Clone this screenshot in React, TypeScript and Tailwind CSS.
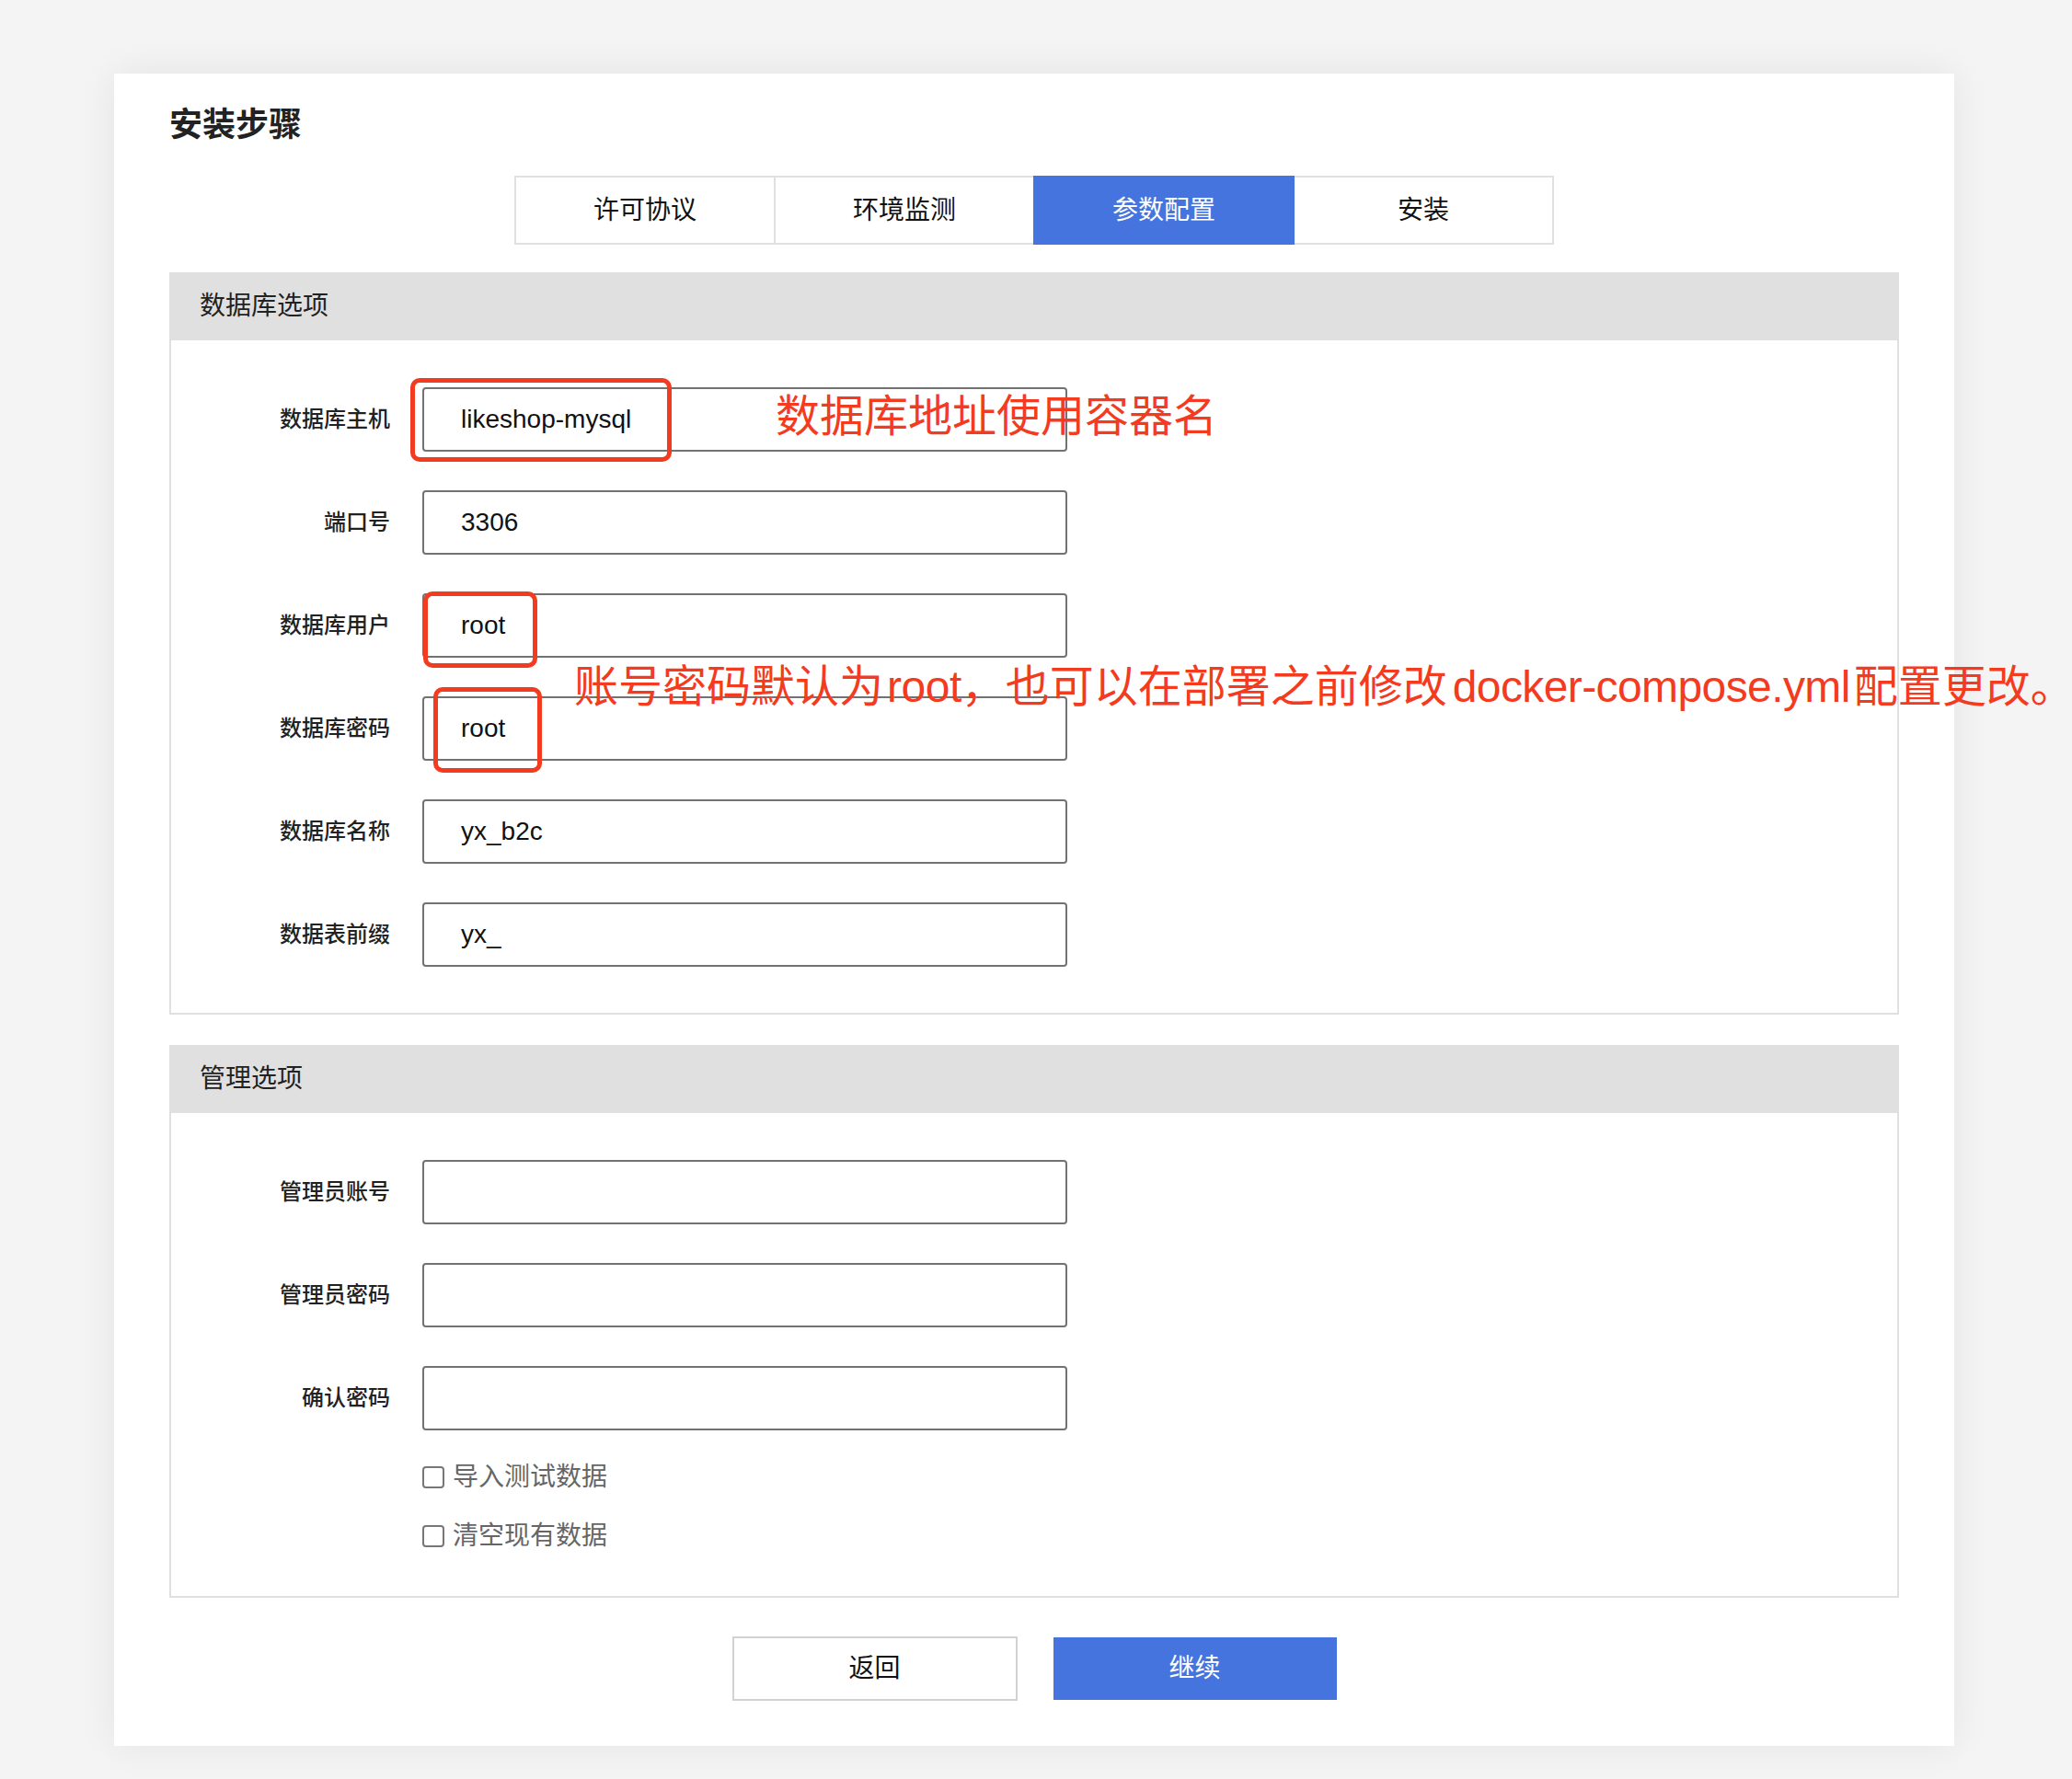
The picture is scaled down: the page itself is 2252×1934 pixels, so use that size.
import { useState } from 'react';

const font = { fontFamily: '"Liberation Sans", "Noto Sans CJK SC", sans-serif' };

interface Field {
  label: string;
  value: string;
}

const dbFields: Field[] = [
  { label: '数据库主机', value: 'likeshop-mysql' },
  { label: '端口号', value: '3306' },
  { label: '数据库用户', value: 'root' },
  { label: '数据库密码', value: 'root' },
  { label: '数据库名称', value: 'yx_b2c' },
  { label: '数据表前缀', value: 'yx_' },
];

const adminFields: Field[] = [
  { label: '管理员账号', value: '' },
  { label: '管理员密码', value: '' },
  { label: '确认密码', value: '' },
];

const steps = ['许可协议', '环境监测', '参数配置', '安装'];

const FieldRow = ({ label, value }: Field) => (
  <div className="flex items-center h-[70px]">
    <div className="w-[238px] text-right text-[24px] font-medium text-[#222] leading-none">{label}</div>
    <input
      type="text"
      readOnly
      value={value}
      className="ml-[35px] w-[701px] h-[70px] border-2 border-[#727272] rounded-[4px] pl-[40px] text-[28px] text-[#111] outline-none bg-white"
      style={font}
    />
  </div>
);

const SectionHeader = ({ title }: { title: string }) => (
  <div className="h-[74px] bg-[#e0e0e0] flex items-center pl-[31px] text-[28px] text-[#222] leading-none">{title}</div>
);

export default function App() {
  const [importDemo, setImportDemo] = useState(false);
  const [clearData, setClearData] = useState(false);

  return (
    <div className="min-h-[1934px] bg-[#f4f4f4] pt-[80px] pl-[124px]" style={font}>
      <div className="relative w-[2000px] bg-white px-[60px] pt-[38px] pb-[49px] shadow-[0_0_40px_rgba(0,0,0,0.07)]">
        <h1 className="text-[36px] font-bold text-[#222] leading-none h-[37px]">安装步骤</h1>

        {/* 步骤 */}
        <div className="flex justify-center mt-[36px]">
          {steps.map((s, i) => (
            <div
              key={s}
              className={`w-[284px] h-[75px] flex items-center justify-center text-[28px] leading-none border-2 ${
                i > 0 ? '-ml-[2px]' : ''
              } ${i === 2 ? 'bg-[#4674df] border-[#4674df] text-white relative z-10' : 'bg-white border-[#e0e0e0] text-[#111]'}`}
            >
              {s}
            </div>
          ))}
        </div>

        {/* 数据库选项 */}
        <div className="mt-[30px] border-2 border-t-0 border-[#e0e0e0]">
          <SectionHeader title="数据库选项" />
          <div className="flex flex-col gap-[42px] pt-[51px] pb-[50px]">
            {dbFields.map((f) => (
              <FieldRow key={f.label} {...f} />
            ))}
          </div>
        </div>

        {/* 管理选项 */}
        <div className="mt-[33px] border-2 border-t-0 border-[#e0e0e0]">
          <SectionHeader title="管理选项" />
          <div className="flex flex-col gap-[42px] pt-[51px]">
            {adminFields.map((f) => (
              <FieldRow key={f.label} {...f} />
            ))}
          </div>
          <div className="flex flex-col gap-[24px] pt-[31px] pb-[45px] pl-[273px]">
            <label className="flex items-center h-[40px] text-[28px] text-[#666] leading-none cursor-pointer">
              <input
                type="checkbox"
                checked={importDemo}
                onChange={(e) => setImportDemo(e.target.checked)}
                className="appearance-none w-[24px] h-[24px] border-2 border-[#777] rounded-[4px] bg-white checked:bg-[#4674df]"
              />
              <span className="ml-[9px]">导入测试数据</span>
            </label>
            <label className="flex items-center h-[40px] text-[28px] text-[#666] leading-none cursor-pointer">
              <input
                type="checkbox"
                checked={clearData}
                onChange={(e) => setClearData(e.target.checked)}
                className="appearance-none w-[24px] h-[24px] border-2 border-[#777] rounded-[4px] bg-white checked:bg-[#4674df]"
              />
              <span className="ml-[9px]">清空现有数据</span>
            </label>
          </div>
        </div>

        <div className="flex justify-center gap-[39px] mt-[42px]">
          <button className="w-[310px] h-[70px] border-2 border-[#d2d2d2] bg-white text-[28px] text-[#111]">返回</button>
          <button className="w-[308px] h-[68px] mt-px bg-[#4674df] text-[28px] text-white">继续</button>
        </div>

        {/* 红色标注 */}
        <div className="absolute left-[322px] top-[331px] w-[284px] h-[91px] border-[5px] border-[#f23b1f] rounded-[10px]" />
        <div className="absolute left-[336px] top-[563px] w-[124px] h-[83px] border-[5px] border-[#f23b1f] rounded-[10px]" />
        <div className="absolute left-[347px] top-[667px] w-[118px] h-[93px] border-[5px] border-[#f23b1f] rounded-[10px]" />
        <div className="absolute left-[719px] top-[349px] text-[48px] leading-none text-[#f23b1f] whitespace-nowrap">
          数据库地址使用容器名
        </div>
        <div className="absolute left-[500px] top-[643px] text-[48px] leading-none text-[#f23b1f] whitespace-nowrap">
          账号密码默认为<span className="ml-[4px] tracking-[-0.5px]">root</span>，也可以在部署之前修改
          <span className="ml-[6px] mr-[4px] tracking-[-0.6px]">docker-compose.yml</span>配置更改。
        </div>
      </div>
    </div>
  );
}
